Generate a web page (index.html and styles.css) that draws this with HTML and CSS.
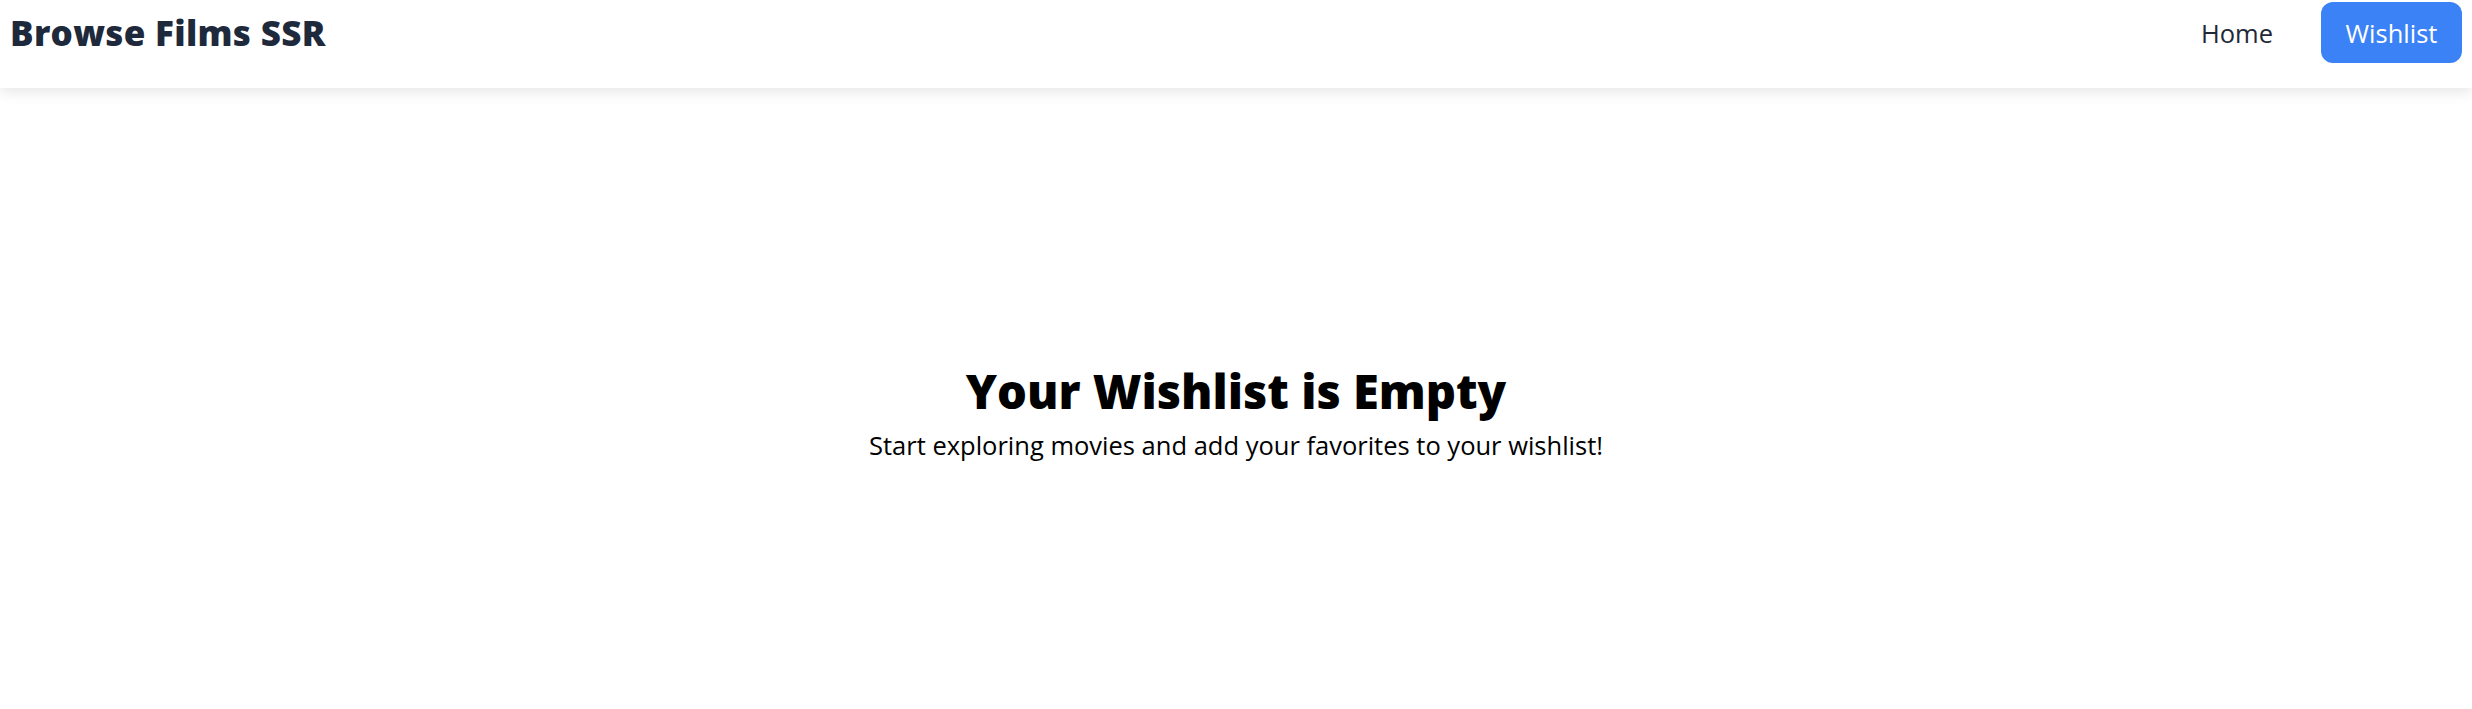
FILE: index.html
```html
<!DOCTYPE html>
<html lang="en">
<head>
<meta charset="utf-8">
<title>Browse Films SSR</title>
<link rel="stylesheet" href="styles.css">
</head>
<body>
<header class="topbar">
  <a class="brand" href="#">Browse Films SSR</a>
  <nav class="nav">
    <a class="nav-link" href="#">Home</a>
    <a class="nav-btn" href="#">Wishlist</a>
  </nav>
</header>
<main class="empty">
  <h1 class="empty-title">Your Wishlist is Empty</h1>
  <p class="empty-text">Start exploring movies and add your favorites to your wishlist!</p>
</main>
</body>
</html>
```
FILE: styles.css
```css
html, body {
  margin: 0;
  padding: 0;
  background: #ffffff;
}
body {
  font-family: "Open Sans", "Noto Sans", sans-serif;
  height: 709px;
  overflow: hidden;
}
a { text-decoration: none; }

.topbar {
  display: flex;
  justify-content: space-between;
  align-items: center;
  height: 65px;
  padding: 0 10px 23px 10px;
  background: #ffffff;
  box-shadow: 0 5px 12px rgba(0, 0, 0, 0.09);
  position: relative;
  z-index: 1;
}
.brand {
  font-size: 35px;
  font-weight: 800;
  color: #1e293b;
  letter-spacing: 0.3px;
}
.nav {
  display: flex;
  align-items: center;
  gap: 24px;
}
.nav-link {
  font-size: 25.5px;
  color: #1f2937;
  padding: 12px 24px;
}
.nav-btn {
  display: flex;
  align-items: center;
  justify-content: center;
  width: 141px;
  height: 61px;
  box-sizing: border-box;
  background: #3b82f6;
  color: #ffffff;
  font-size: 25.5px;
  font-weight: 500;
  border-radius: 12px;
}
.empty {
  display: flex;
  flex-direction: column;
  align-items: center;
  padding-top: 267px;
}
.empty-title {
  margin: 0;
  font-size: 47px;
  font-weight: 800;
  color: #000000;
  line-height: 72px;
}
.empty-text {
  margin: 0;
  font-size: 25.5px;
  color: #000000;
  line-height: 36px;
}
```
